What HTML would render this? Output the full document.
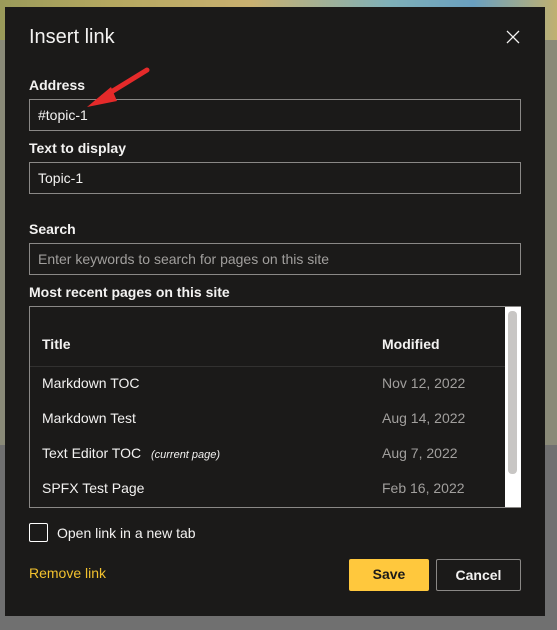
<!DOCTYPE html>
<html><head><style>
*{box-sizing:border-box;margin:0;padding:0}
body{width:557px;height:630px;overflow:hidden;position:relative;font-family:"Liberation Sans",sans-serif;background:#707070}
.bgtop{position:absolute;left:0;top:0;width:557px;height:445px;background:linear-gradient(90deg,#9a9a5a 0%,#b5a860 20%,#c9b070 45%,#7fb0b8 70%,#6aa0c0 85%,#c0b070 100%)}
.bgtop2{position:absolute;left:0;top:40px;width:557px;height:405px;background:#8a8a78}
.dlg{position:absolute;left:5px;top:7px;width:540px;height:609px;background:#1b1a19;color:#fff}
.t{position:absolute;left:24px;top:19px;font-size:20px;color:#f3f2f1}
.x{position:absolute;left:500px;top:22px}
.lbl{position:absolute;left:24px;font-size:14px;font-weight:bold;color:#f3f2f1}
.inp{position:absolute;left:24px;width:492px;height:32px;border:1px solid #8a8886;font-size:14px;padding:7px 8px;color:#f3f2f1}
.ph{color:#a19f9d}
.tbl{position:absolute;left:24px;top:299px;width:492px;height:202px;border:1px solid #8a8886}
.row{position:absolute;left:12px;font-size:14px;color:#f3f2f1}
.d{position:absolute;left:352px;font-size:14px;color:#a19f9d}
.sb{position:absolute;left:475px;top:0;width:16px;height:200px;background:#fff}
.th{position:absolute;left:3px;top:4px;width:9px;height:163px;background:#c8c6c4;border-radius:4px}
.cb{position:absolute;left:24px;top:516px;width:19px;height:19px;border:1px solid #fff;border-radius:2px}
.btn{position:absolute;top:552px;height:32px;font-size:14px;font-weight:bold;text-align:center;line-height:30px;border-radius:2px}
</style></head><body>
<div class="bgtop"></div><div class="bgtop2"></div>
<div class="dlg">
<div class="t">Insert link</div>
<svg class="x" width="16" height="16" viewBox="0 0 16 16"><path d="M2 2L14 14M14 2L2 14" stroke="#f3f2f1" stroke-width="1.3"/></svg>
<div class="lbl" style="top:70px">Address</div>
<div class="inp" style="top:92px">#topic-1</div>
<svg style="position:absolute;left:78px;top:60px" width="70" height="45" viewBox="0 0 70 45"><path d="M64 3L20 30" stroke="#e52a2a" stroke-width="5" stroke-linecap="round"/><path d="M4 40L28 20L34 34Z" fill="#e52a2a"/></svg>
<div class="lbl" style="top:133px">Text to display</div>
<div class="inp" style="top:155px">Topic-1</div>
<div class="lbl" style="top:214px">Search</div>
<div class="inp" style="top:236px"><span class="ph">Enter keywords to search for pages on this site</span></div>
<div class="lbl" style="top:277px">Most recent pages on this site</div>
<div class="tbl">
<div class="row" style="top:29px;font-weight:bold">Title</div>
<div class="d" style="top:29px;font-weight:bold;color:#f3f2f1">Modified</div>
<div style="position:absolute;left:0;top:59px;width:475px;height:1px;background:#323130"></div>
<div class="row" style="top:68px">Markdown TOC</div><div class="d" style="top:68px">Nov 12, 2022</div>
<div class="row" style="top:103px">Markdown Test</div><div class="d" style="top:103px">Aug 14, 2022</div>
<div class="row" style="top:138px">Text Editor TOC <i style="font-size:11px;margin-left:6px">(current page)</i></div><div class="d" style="top:138px">Aug 7, 2022</div>
<div class="row" style="top:173px">SPFX Test Page</div><div class="d" style="top:173px">Feb 16, 2022</div>
<div class="sb"><div class="th"></div></div>
</div>
<div class="cb"></div>
<div style="position:absolute;left:52px;top:518px;font-size:14px;color:#f3f2f1">Open link in a new tab</div>
<div style="position:absolute;left:24px;top:558px;font-size:14px;color:#f2c12e">Remove link</div>
<div class="btn" style="left:344px;width:80px;background:#ffc83d;color:#1b1a19">Save</div>
<div class="btn" style="left:431px;width:85px;border:1px solid #8a8886;color:#f3f2f1">Cancel</div>
</div>
</body></html>
